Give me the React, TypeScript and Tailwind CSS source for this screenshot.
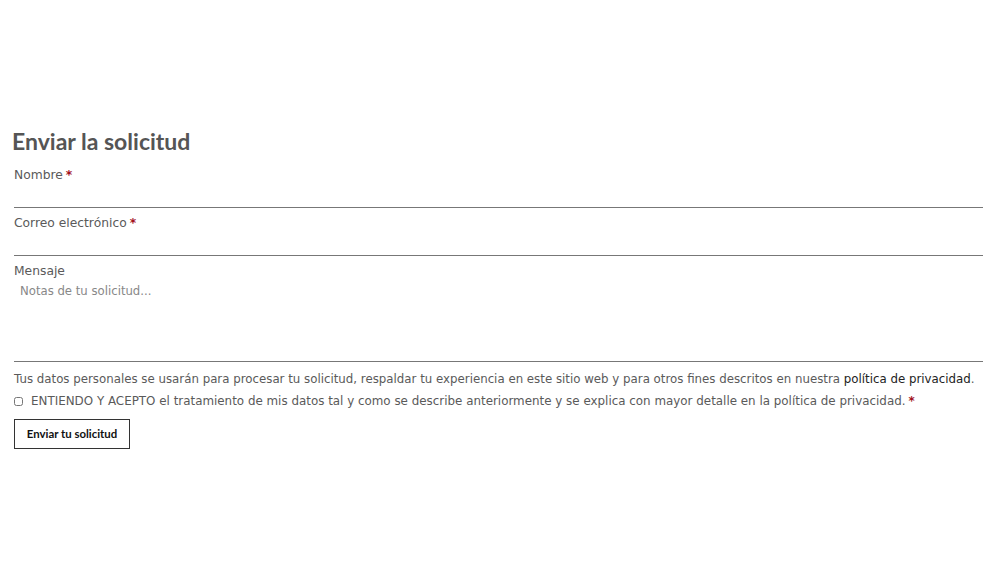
import { useState } from 'react'

const body = { fontFamily: '"DejaVu Sans", sans-serif' }

function Req() {
  return <span className="text-[#a3121b] font-bold ml-[3px]">*</span>
}

export default function App() {
  const [ok, setOk] = useState(false)

  return (
    <div className="w-[1000px] h-[563px] bg-white pt-[127px] pl-[12px] pr-[17px] text-[#5a5a5a]">
      <h2 className="font-['Lato',sans-serif] font-bold text-[23px] leading-[28px] text-[#555]">Enviar la solicitud</h2>

      <form className="pl-[2px] mt-[12px]" style={body} onSubmit={e => e.preventDefault()}>
        <label className="block text-[12.3px] leading-[16px]">Nombre<Req /></label>
        <input className="block w-full h-[25px] border-b border-[#777] outline-none" />

        <label className="block text-[12.3px] leading-[16px] mt-[7px]">Correo electrónico<Req /></label>
        <input className="block w-full h-[25px] border-b border-[#777] outline-none" />

        <label className="block text-[12.3px] leading-[16px] mt-[7px]">Mensaje</label>
        <textarea
          placeholder="Notas de tu solicitud..."
          className="block w-full h-[79px] mt-[4px] px-[6px] border-b border-[#777] outline-none resize-none text-[11.7px] placeholder:text-[#888]"
        />

        <p className="text-[11.8px] leading-[14px] mt-[10px]">
          Tus datos personales se usarán para procesar tu solicitud, respaldar tu experiencia en este sitio web y para otros fines descritos en nuestra{' '}
          <a className="text-[#222]">política de privacidad</a>.
        </p>

        <label className="flex items-center gap-[8px] text-[11.9px] leading-[14px] mt-[8px]">
          <input type="checkbox" checked={ok} onChange={e => setOk(e.target.checked)} className="w-[9px] h-[9px] m-0" />
          <span>ENTIENDO Y ACEPTO el tratamiento de mis datos tal y como se describe anteriormente y se explica con mayor detalle en la política de privacidad.<Req /></span>
        </label>

        <button type="submit" className="block mt-[11px] w-[116px] h-[30px] border border-[#333] bg-white font-['Lato',sans-serif] font-bold text-[11.4px] text-[#111]">
          Enviar tu solicitud
        </button>
      </form>
    </div>
  )
}
